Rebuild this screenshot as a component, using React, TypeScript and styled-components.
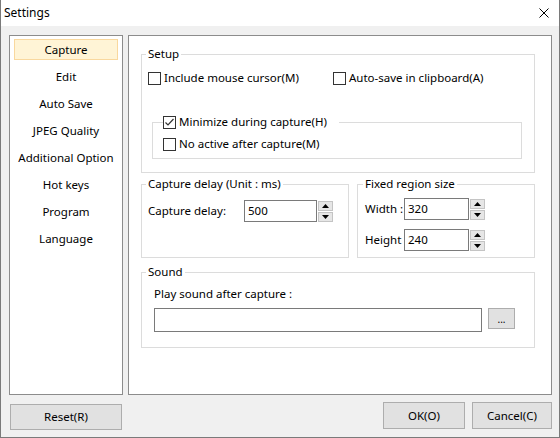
import React from 'react';
import styled, { createGlobalStyle } from 'styled-components';

const Global = createGlobalStyle`
  html, body { margin: 0; padding: 0; background: #fff; }
  body {
    font-family: "Noto Sans", "Liberation Sans", sans-serif;
    font-size: 11.5px;
    color: #000;
  }
  * { box-sizing: border-box; }
`;

const Window = styled.div`
  width: 560px;
  height: 438px;
  background: #f0f0f0;
  border: 1px solid #7a7a7a;
  border-top: none;
  display: flex;
  flex-direction: column;
`;

const TitleBar = styled.div`
  height: 26px;
  flex: none;
  background: #fff;
  display: flex;
  align-items: center;
  justify-content: space-between;
  padding: 0 10px 0 3px;
  line-height: 16px;
  font-size: 12px;
`;

const Body = styled.div`
  flex: 1;
  display: flex;
  flex-direction: column;
  padding: 9px 7px 0 8px;
`;

const Panels = styled.div`
  display: flex;
  gap: 5px;
  height: 360px;
`;

const NavList = styled.div`
  width: 114px;
  border: 1px solid #8c8c8c;
  background: #fff;
  padding: 3px 4px;
  display: flex;
  flex-direction: column;
  gap: 6px;
`;

const NavItem = styled.div<{ $active?: boolean }>`
  height: 21px;
  display: flex;
  align-items: center;
  justify-content: center;
  line-height: 16px;
  white-space: nowrap;
  border: 1px solid ${p => (p.$active ? '#f9d89e' : 'transparent')};
  background: ${p => (p.$active ? '#fff4d6' : 'transparent')};
`;

const Main = styled.div`
  width: 424px;
  border: 1px solid #8c8c8c;
  background: #fff;
  padding: 10px 16px 0 12px;
  display: flex;
  flex-direction: column;
`;

const Group = styled.fieldset<{ $pt?: number; $pl?: number; $pb?: number }>`
  margin: 0;
  min-width: 0;
  border: 1px solid #dcdcdc;
  padding: ${p => p.$pt ?? 6}px 6px ${p => p.$pb ?? 6}px ${p => p.$pl ?? 6}px;
`;

const Legend = styled.legend`
  padding: 0 2px;
  margin-left: -2px;
  height: 16px;
  line-height: 16px;
  white-space: nowrap;
`;

const InnerGroup = styled.fieldset`
  margin: 28px 0 0 4px;
  width: 370px;
  min-width: 0;
  border: 1px solid #dcdcdc;
  padding: 6px 6px 6px 10px;
`;

const CheckLegend = styled.legend`
  display: flex;
  align-items: center;
  height: 16px;
  padding: 0 12px 0 0;
  line-height: 16px;
`;

const CheckRow = styled.div`
  display: grid;
  grid-template-columns: 185px auto;
  height: 16px;
`;

const Check = styled.label`
  display: flex;
  align-items: center;
  gap: 3px;
  height: 16px;
  line-height: 16px;
  white-space: nowrap;
`;

const Box = styled.span`
  width: 13px;
  height: 13px;
  border: 1px solid #333;
  background: #fff;
  display: flex;
  align-items: center;
  justify-content: center;
  flex: none;
`;

const GroupRow = styled.div`
  display: flex;
  gap: 8px;
  margin-top: 3px;
`;

const FieldRow = styled.div<{ $labelWidth: number }>`
  display: grid;
  grid-template-columns: ${p => p.$labelWidth}px auto auto;
  justify-content: start;
  align-items: center;
  height: 22px;
`;

const FieldLabel = styled.span`
  line-height: 16px;
  white-space: nowrap;
`;

const NumInput = styled.div<{ $w: number }>`
  width: ${p => p.$w}px;
  height: 22px;
  border: 1px solid #7a7a7a;
  background: #fff;
  padding: 0 3px;
  display: flex;
  align-items: center;
  line-height: 16px;
`;

const Spin = styled.div`
  display: flex;
  flex-direction: column;
  gap: 1px;
  margin-left: 1px;
`;

const SpinBtn = styled.div`
  width: 15px;
  height: 10px;
  border: 1px solid #c4c4c4;
  background: #e6e6e6;
  display: flex;
  align-items: center;
  justify-content: center;
`;

const Stack = styled.div`
  display: flex;
  flex-direction: column;
  gap: 9px;
`;

const Indent = styled.div`
  padding-left: 6px;
`;

const SoundLabel = styled.div`
  line-height: 16px;
  height: 16px;
`;

const SoundRow = styled.div`
  display: flex;
  gap: 6px;
  margin-top: 6px;
  align-items: flex-start;
`;

const PathInput = styled.div`
  width: 328px;
  height: 24px;
  border: 1px solid #7a7a7a;
  background: #fff;
`;

const SmallBtn = styled.div`
  width: 27px;
  height: 21px;
  border: 1px solid #adadad;
  background: #e1e1e1;
  display: flex;
  align-items: center;
  justify-content: center;
  font-size: 10px;
  line-height: 10px;
`;

const Footer = styled.div`
  display: flex;
  margin-top: 7px;
  height: 28px;
`;

const Button = styled.div<{ $w: number; $h: number; $mt?: number }>`
  width: ${p => p.$w}px;
  height: ${p => p.$h}px;
  margin-top: ${p => p.$mt ?? 0}px;
  border: 1px solid #adadad;
  background: #e1e1e1;
  display: flex;
  align-items: center;
  justify-content: center;
  line-height: 16px;
`;

const Spacer = styled.div`
  flex: 1;
`;

const FooterRight = styled.div`
  display: flex;
  gap: 7px;
`;

const Arrow = ({ down }: { down?: boolean }) => (
  <svg width="7" height="4" viewBox="0 0 7 4">
    <polygon points={down ? '0,0 7,0 3.5,4' : '0,4 7,4 3.5,0'} fill="#000" />
  </svg>
);

const Spinner = () => (
  <Spin>
    <SpinBtn><Arrow /></SpinBtn>
    <SpinBtn><Arrow down /></SpinBtn>
  </Spin>
);

const CheckBox = ({ checked, label }: { checked?: boolean; label: string }) => (
  <Check>
    <Box>
      {checked && (
        <svg width="11" height="11" viewBox="0 0 11 11">
          <polyline points="1.5,5.5 4,8 9.5,2" fill="none" stroke="#333" strokeWidth="1.2" />
        </svg>
      )}
    </Box>
    {label}
  </Check>
);

const items = ['Capture', 'Edit', 'Auto Save', 'JPEG Quality', 'Additional Option', 'Hot keys', 'Program', 'Language'];

export default function App() {
  return (
    <>
      <Global />
      <Window>
        <TitleBar>
          <span>Settings</span>
          <svg width="10" height="10" viewBox="0 0 10 10">
            <path d="M0.5 0.5 L9.5 9.5 M9.5 0.5 L0.5 9.5" stroke="#000" strokeWidth="1" />
          </svg>
        </TitleBar>
        <Body>
          <Panels>
            <NavList>
              {items.map((it, i) => (
                <NavItem key={it} $active={i === 0}>{it}</NavItem>
              ))}
            </NavList>
            <Main>
              <Group $pt={8} $pb={13}>
                <Legend>Setup</Legend>
                <CheckRow>
                  <CheckBox label="Include mouse cursor(M)" />
                  <CheckBox label="Auto-save in clipboard(A)" />
                </CheckRow>
                <InnerGroup>
                  <CheckLegend>
                    <CheckBox checked label="Minimize during capture(H)" />
                  </CheckLegend>
                  <CheckBox label="No active after capture(M)" />
                </InnerGroup>
              </Group>
              <GroupRow>
                <Group style={{ width: 208 }} $pt={8} $pb={4}>
                  <Legend>Capture delay (Unit : ms)</Legend>
                  <FieldRow $labelWidth={96}>
                    <FieldLabel>Capture delay:</FieldLabel>
                    <NumInput $w={73}>500</NumInput>
                    <Spinner />
                  </FieldRow>
                </Group>
                <Group style={{ width: 178 }} $pt={6} $pb={6} $pl={7}>
                  <Legend>Fixed region size</Legend>
                  <Stack>
                    <FieldRow $labelWidth={39}>
                      <FieldLabel>Width :</FieldLabel>
                      <NumInput $w={65}>320</NumInput>
                      <Spinner />
                    </FieldRow>
                    <FieldRow $labelWidth={39}>
                      <FieldLabel>Height</FieldLabel>
                      <NumInput $w={65}>240</NumInput>
                      <Spinner />
                    </FieldRow>
                  </Stack>
                </Group>
              </GroupRow>
              <Group style={{ marginTop: 6 }} $pt={6} $pb={15}>
                <Legend>Sound</Legend>
                <Indent>
                  <SoundLabel>Play sound after capture :</SoundLabel>
                  <SoundRow>
                    <PathInput />
                    <SmallBtn>...</SmallBtn>
                  </SoundRow>
                </Indent>
              </Group>
            </Main>
          </Panels>
          <Footer>
            <Button $w={112} $h={26} $mt={2} style={{ marginLeft: 1 }}>Reset(R)</Button>
            <Spacer />
            <FooterRight>
              <Button $w={82} $h={27}>OK(O)</Button>
              <Button $w={80} $h={27}>Cancel(C)</Button>
            </FooterRight>
          </Footer>
        </Body>
      </Window>
    </>
  );
}
